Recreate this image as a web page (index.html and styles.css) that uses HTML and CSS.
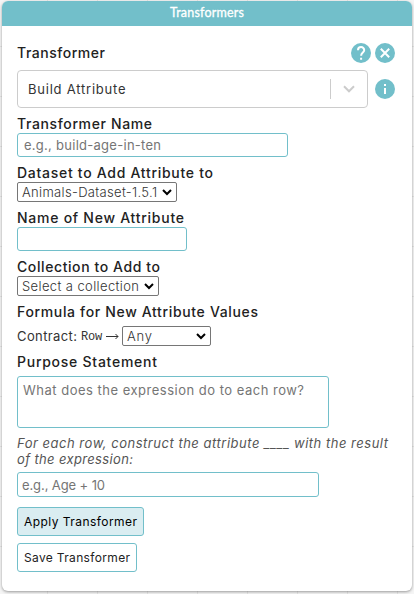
FILE: index.html
```html
<!DOCTYPE html>
<html lang="en">
<head>
<meta charset="utf-8">
<title>Transformers</title>
<link rel="stylesheet" href="styles.css">
</head>
<body>
<main class="panel">
  <header class="titlebar">Transformers</header>
  <div class="content">
    <div class="top-row">
      <h2 class="heading t-type">Transformer</h2>
      <div class="actions">
        <svg class="icon" viewBox="0 0 20 20"><circle cx="10" cy="10" r="10"/><path class="glyph" d="M7 7.2a3.1 3.1 0 0 1 6.2 0c0 2.3-3.1 2.6-3.1 5.6"/><path class="solid" d="M9.1 14.7h2v2h-2z"/></svg>
        <svg class="icon" viewBox="0 0 20 20"><circle cx="10" cy="10" r="10"/><path class="glyph" d="M5.8 5.8l8.4 8.4M14.2 5.8l-8.4 8.4"/></svg>
      </div>
    </div>
    <div class="picker-row">
      <div class="picker">
        <span class="picker-value">Build Attribute</span>
        <span class="divider"></span>
        <svg class="picker-arrow" viewBox="0 0 12 8"><path d="M1 1.3l5 5 5-5"/></svg>
      </div>
      <svg class="icon" viewBox="0 0 20 20"><circle cx="10" cy="10" r="10"/><path class="solid" d="M9 5h2v2H9zM9 9h2v6H9z"/></svg>
    </div>

    <section class="field">
      <h2 class="heading t-name">Transformer Name</h2>
      <div class="input input-name"><span>e.g., build-age-in-ten</span></div>
    </section>
    <section class="field">
      <h2 class="heading t-dataset">Dataset to Add Attribute to</h2>
      <div class="select select-dataset"><span>Animals-Dataset-1.5.1</span><svg class="caret" viewBox="0 0 10 7"><path d="M1 1l4 4 4-4"/></svg></div>
    </section>
    <section class="field">
      <h2 class="heading t-attribute">Name of New Attribute</h2>
      <div class="input input-attribute"></div>
    </section>
    <section class="field">
      <h2 class="heading t-collection">Collection to Add to</h2>
      <div class="select select-collection"><span>Select a collection</span><svg class="caret" viewBox="0 0 10 7"><path d="M1 1l4 4 4-4"/></svg></div>
    </section>
    <section class="field">
      <h2 class="heading t-formula">Formula for New Attribute Values</h2>
      <div class="contract">
        <span class="contract-label">Contract:</span>
        <span class="mono">Row</span>
        <svg class="arrow" viewBox="0 0 13 8"><path d="M0 4.5h12M9.5 2L12 4.5 9.5 7"/></svg>
        <div class="select select-any"><span>Any</span><svg class="caret" viewBox="0 0 10 7"><path d="M1 1l4 4 4-4"/></svg></div>
      </div>
    </section>
    <section class="field">
      <h2 class="heading t-purpose">Purpose Statement</h2>
      <div class="textarea">What does the expression do to each row?</div>
    </section>

    <p class="hint"><span class="hint-a">For each row, construct the attribute ____ with the result</span><br><span class="hint-b">of the expression:</span></p>
    <div class="input input-formula"><span>e.g., Age + 10</span></div>
    <button class="button button-apply">Apply Transformer</button>
    <button class="button button-save">Save Transformer</button>
  </div>
</main>
</body>
</html>
```
FILE: styles.css
```css
* { box-sizing: border-box; }
body {
  margin: 0;
  padding: 1px 2px 3px;
  height: 594px;
  overflow: hidden;
  font-family: Inter, "Liberation Sans", sans-serif;
  color: #333;
  background-color: #f5f5f5;
  background-image:
    linear-gradient(90deg, #e5e5e5 1px, transparent 1px),
    linear-gradient(#e5e5e5 1px, transparent 1px);
  background-size: 50px 50px;
  background-position: 47px 46px;
}
.panel {
  width: 410px;
  height: 590px;
  background: #fff;
  border-radius: 6px;
  box-shadow: 0 1px 3px rgba(0, 0, 0, .38);
  overflow: hidden;
}
.titlebar {
  height: 25px;
  text-align: center;
  background: #72bfca;
  color: #fff;
  font: 400 12.5px/24px Lato, sans-serif;
  letter-spacing: .2px;
  -webkit-text-stroke: .3px #fff;
}
.content { padding: 17px 17px 0 15px; }
.top-row { display: flex; justify-content: space-between; height: 27px; }
.heading {
  margin: 0;
  height: 18px;
  font-size: 14px;
  font-weight: 500;
  line-height: 18px;
  color: #222;
  white-space: nowrap;
}
.t-type { letter-spacing: .53px; margin-top: 1px; }
.t-name { letter-spacing: .627px; }
.t-dataset { letter-spacing: .716px; }
.t-attribute { letter-spacing: .742px; }
.t-collection { letter-spacing: .593px; }
.t-formula { letter-spacing: .655px; }
.t-purpose { letter-spacing: .742px; }
.actions { display: flex; gap: 4px; }
.icon { width: 20px; height: 20px; flex: none; fill: #72bfca; }
.icon .glyph { fill: none; stroke: #fff; stroke-width: 2; }
.icon .solid { fill: #fff; }
.picker-row { display: flex; align-items: center; gap: 7px; margin-bottom: 7px; }
.picker {
  display: flex;
  align-items: center;
  width: 351px;
  height: 38px;
  padding: 0 12px 0 10px;
  border: 1px solid #ccc;
  border-radius: 4px;
}
.picker-value { flex: 1; font-size: 13px; letter-spacing: .778px; }
.divider { width: 1px; height: 20px; background: #ccc; margin-right: 12px; }
.picker-arrow { width: 12px; height: 8px; fill: none; stroke: #ccc; stroke-width: 2; }
.field { margin-bottom: 7px; }
.input, .textarea {
  border: 1px solid #72bfca;
  border-radius: 3px;
  color: #757575;
  font-size: 13px;
  white-space: nowrap;
}
.input { display: flex; align-items: center; height: 24px; padding: 0 6px; }
.input-name { width: 271px; letter-spacing: .269px; }
.input-attribute { width: 170px; }
.input-formula { width: 302px; height: 25px; padding: 1px 4px 0; letter-spacing: -.1px; margin-bottom: 10px; }
.select {
  display: flex;
  align-items: center;
  justify-content: space-between;
  height: 20px;
  padding: 0 4px;
  border: 1px solid #767676;
  border-radius: 2px;
  font-size: 13px;
  font-weight: 300;
  white-space: nowrap;
}
.select-dataset { width: 160px; letter-spacing: .324px; }
.select-collection { width: 142px; letter-spacing: .387px; }
.select-any { width: 89px; letter-spacing: .789px; }
.caret { width: 10px; height: 7px; flex: none; fill: none; stroke: #000; stroke-width: 2; }
.contract { display: flex; align-items: center; margin-top: 5px; font-size: 13px; }
.contract-label { width: 64px; letter-spacing: .395px; }
.mono { width: 25px; padding-top: 2px; font: 12px "Liberation Mono", monospace; letter-spacing: -.2px; }
.arrow { width: 13px; height: 8px; margin-right: 3px; fill: none; stroke: #333; stroke-width: 1; }
.textarea { width: 312px; height: 52px; margin-top: 5px; padding: 5px 5px; line-height: 16px; letter-spacing: .497px; }
.hint { margin: 0 0 5px; font-size: 13px; line-height: 16px; font-style: italic; color: #555; white-space: nowrap; }
.hint-a { letter-spacing: .513px; }
.hint-b { letter-spacing: .358px; }
.button {
  display: block;
  height: 29px;
  margin: 0 0 7px;
  padding: 0 6px;
  border: 1px solid #72bfca;
  border-radius: 3px;
  background: #fff;
  color: #222;
  font: 400 12px Inter, sans-serif;
  text-align: left;
  white-space: nowrap;
}
.button-apply { width: 127px; background: #daedf1; color: #000; letter-spacing: .449px; }
.button-save { width: 120px; letter-spacing: .34px; }
```
